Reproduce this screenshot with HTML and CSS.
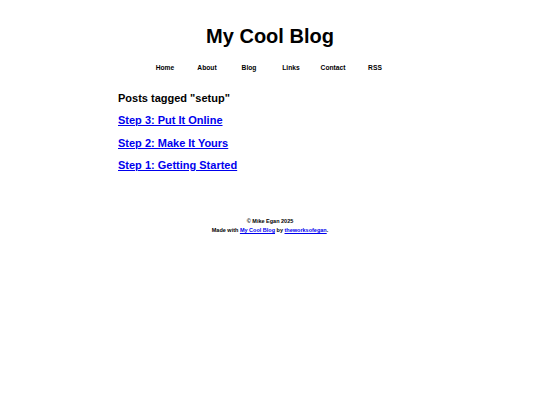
FILE: index.html
```html
<!DOCTYPE html>
<html>
<head>
<meta charset="utf-8">
<title>My Cool Blog</title>
<link rel="stylesheet" href="styles.css">
</head>
<body>
<header class="site-header">
  <h1 class="site-title">My Cool Blog</h1>
  <nav class="site-nav">
    <a href="#">Home</a>
    <a href="#">About</a>
    <a href="#">Blog</a>
    <a href="#">Links</a>
    <a href="#">Contact</a>
    <a href="#">RSS</a>
  </nav>
</header>
<main class="content">
  <h2 class="tag-heading">Posts tagged "setup"</h2>
  <ul class="post-list">
    <li><a href="#">Step 3: Put It Online</a></li>
    <li><a href="#">Step 2: Make It Yours</a></li>
    <li><a href="#">Step 1: Getting Started</a></li>
  </ul>
</main>
<footer class="site-footer">
  <p>© Mike Egan 2025</p>
  <p>Made with <a href="#">My Cool Blog</a> by <a href="#">theworksofegan</a>.</p>
</footer>
</body>
</html>
```
FILE: styles.css
```css
html, body {
  margin: 0;
  padding: 0;
  background: #fff;
}
body {
  font-family: "Liberation Sans", Arial, sans-serif;
  font-weight: bold;
  color: #000;
}
.site-header {
  text-align: center;
  padding-top: 24px;
}
.site-title {
  margin: 0;
  font-size: 20px;
  line-height: 24px;
}
.site-nav {
  display: flex;
  justify-content: center;
  margin-top: 16px;
}
.site-nav a {
  width: 42px;
  text-align: center;
  font-size: 6.7px;
  line-height: 8px;
  color: #000;
  text-decoration: none;
}
.content {
  width: 304px;
  margin: 19px auto 0;
}
.tag-heading {
  margin: 0;
  font-size: 11px;
  line-height: 14px;
}
.post-list {
  list-style: none;
  margin: 5px 0 0;
  padding: 0;
  display: flex;
  flex-direction: column;
  gap: 3.5px;
}
.post-list li {
  line-height: 18px;
}
.post-list a {
  font-size: 11px;
  line-height: 18px;
  color: #0000ee;
  text-decoration: underline;
}
.site-footer {
  text-align: center;
  margin-top: 43px;
  font-size: 5.5px;
  line-height: 9px;
}
.site-footer p {
  margin: 0;
}
.site-footer a {
  color: #0000ee;
}
```
